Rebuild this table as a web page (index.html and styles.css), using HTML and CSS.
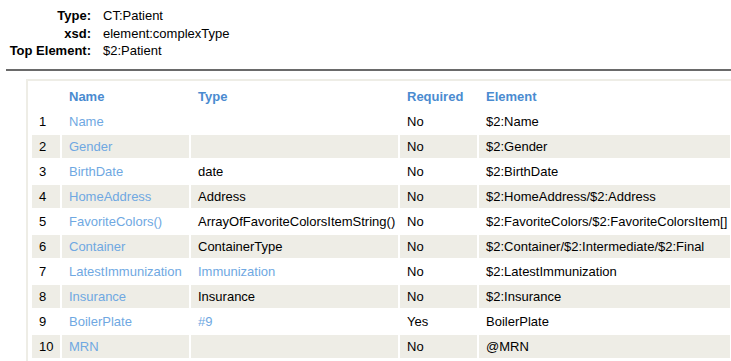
FILE: index.html
```html
<!DOCTYPE html>
<html lang="en">
<head>
  <meta charset="UTF-8" />
  <title>CT:Patient</title>
  <link rel="stylesheet" href="styles.css">
</head>
<body>

  <dl class="summary">
    <dt>Type:</dt>
    <dd>CT:Patient</dd>
    <dt>xsd:</dt>
    <dd>element:complexType</dd>
    <dt>Top Element:</dt>
    <dd>$2:Patient</dd>
  </dl>

  <hr class="rule" />

  <div class="fields">
    <table class="field-table">
      <thead>
        <tr>
          <th class="col-num"></th>
          <th class="col-name">Name</th>
          <th class="col-type">Type</th>
          <th class="col-req">Required</th>
          <th class="col-el">Element</th>
        </tr>
      </thead>
      <tbody>
        <tr>
          <td>1</td>
          <td><a href="#">Name</a></td>
          <td></td>
          <td>No</td>
          <td>$2:Name</td>
        </tr>
        <tr>
          <td>2</td>
          <td><a href="#">Gender</a></td>
          <td></td>
          <td>No</td>
          <td>$2:Gender</td>
        </tr>
        <tr>
          <td>3</td>
          <td><a href="#">BirthDate</a></td>
          <td>date</td>
          <td>No</td>
          <td>$2:BirthDate</td>
        </tr>
        <tr>
          <td>4</td>
          <td><a href="#">HomeAddress</a></td>
          <td>Address</td>
          <td>No</td>
          <td>$2:HomeAddress/$2:Address</td>
        </tr>
        <tr>
          <td>5</td>
          <td><a href="#">FavoriteColors()</a></td>
          <td>ArrayOfFavoriteColorsItemString()</td>
          <td>No</td>
          <td>$2:FavoriteColors/$2:FavoriteColorsItem[]</td>
        </tr>
        <tr>
          <td>6</td>
          <td><a href="#">Container</a></td>
          <td>ContainerType</td>
          <td>No</td>
          <td>$2:Container/$2:Intermediate/$2:Final</td>
        </tr>
        <tr>
          <td>7</td>
          <td><a href="#">LatestImmunization</a></td>
          <td><a href="#">Immunization</a></td>
          <td>No</td>
          <td>$2:LatestImmunization</td>
        </tr>
        <tr>
          <td>8</td>
          <td><a href="#">Insurance</a></td>
          <td>Insurance</td>
          <td>No</td>
          <td>$2:Insurance</td>
        </tr>
        <tr>
          <td>9</td>
          <td><a href="#">BoilerPlate</a></td>
          <td><a href="#">#9</a></td>
          <td>Yes</td>
          <td>BoilerPlate</td>
        </tr>
        <tr>
          <td>10</td>
          <td><a href="#">MRN</a></td>
          <td></td>
          <td>No</td>
          <td>@MRN</td>
        </tr>
      </tbody>
    </table>
  </div>

</body>
</html>
```

FILE: styles.css
```css
html, body {
  overflow: hidden;
}

body {
  margin: 0;
  padding: 7px 0 0;
  font-family: "Liberation Sans", Arial, sans-serif;
  font-size: 13px;
  color: #000;
  background: #fff;
}

.summary {
  display: grid;
  grid-template-columns: 91px auto;
  column-gap: 12px;
  margin: 0;
  line-height: 17.5px;
}

.summary dt {
  font-weight: bold;
  text-align: right;
  white-space: nowrap;
}

.summary dd {
  margin: 0;
}

.rule {
  margin: 9px 0 8px 6px;
  height: 0;
  border: none;
  border-top: 2px solid #6a6a6a;
}

.fields {
  margin-left: 26px;
  width: 706px;
  padding: 2px;
  border: 2px solid #eeede6;
}

.field-table {
  table-layout: fixed;
  width: 702px;
  border-collapse: separate;
  border-spacing: 2px;
}

.field-table th,
.field-table td {
  box-sizing: border-box;
  height: 23px;
  padding: 4px 7px;
  line-height: 15px;
  text-align: left;
  white-space: nowrap;
}

.field-table th {
  font-weight: bold;
  color: #4a8bd0;
}

.field-table tbody tr:nth-child(even) td {
  background: #eeede6;
}

.col-num { width: 28px; }
.col-name { width: 127px; }
.col-type { width: 207px; }
.col-req { width: 77px; }
.col-el { width: 251px; }

.field-table a {
  color: #6fa8e2;
  text-decoration: none;
}
```
